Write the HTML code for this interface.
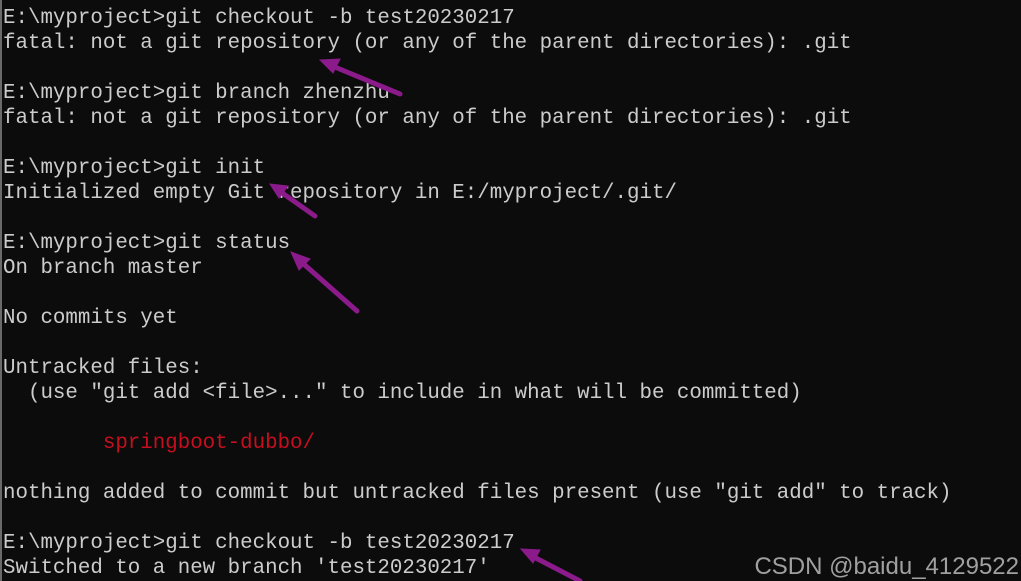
<!DOCTYPE html>
<html><head><style>
html,body{margin:0;padding:0;background:#0c0c0c;width:1021px;height:581px;overflow:hidden;}
body{border-left:2px solid #6a6a6a;box-sizing:border-box;}
pre{margin:0;padding:6px 0 0 1px;font-family:"Liberation Mono","Noto Sans CJK SC",monospace;font-size:20.8px;line-height:25px;color:#cccccc;}
.r{color:#c50f1f;}
.wm{position:absolute;right:2px;top:553px;font-family:"Liberation Sans",sans-serif;font-size:24px;color:#a0a0a0;}
svg{position:absolute;left:0;top:0;}
</style></head><body>
<pre>E:\myproject&gt;git checkout -b test20230217
fatal: not a git repository (or any of the parent directories): .git

E:\myproject&gt;git branch zhenzhu
fatal: not a git repository (or any of the parent directories): .git

E:\myproject&gt;git init
Initialized empty Git repository in E:/myproject/.git/

E:\myproject&gt;git status
On branch master

No commits yet

Untracked files:
  (use "git add &lt;file&gt;..." to include in what will be committed)

        <span class="r">springboot-dubbo/</span>

nothing added to commit but untracked files present (use "git add" to track)

E:\myproject&gt;git checkout -b test20230217
Switched to a new branch 'test20230217'</pre>
<div class="wm">CSDN @baidu_4129522</div>
<svg width="1021" height="581">
<g fill="#8b1a8b" stroke="#8b1a8b" stroke-linecap="round">
<line x1="400" y1="94" x2="330" y2="65" stroke-width="5"/><polygon points="320,60 340,59 333,73"/>
<line x1="315" y1="216" x2="278" y2="190" stroke-width="5"/><polygon points="270,184 288,186 279,198"/>
<line x1="357" y1="311" x2="298" y2="259" stroke-width="5"/><polygon points="291,252 310,259 299,270"/>
<line x1="580" y1="581" x2="530" y2="555" stroke-width="5"/><polygon points="521,549 540,550 533,563"/>
</g></svg>
</body></html>
